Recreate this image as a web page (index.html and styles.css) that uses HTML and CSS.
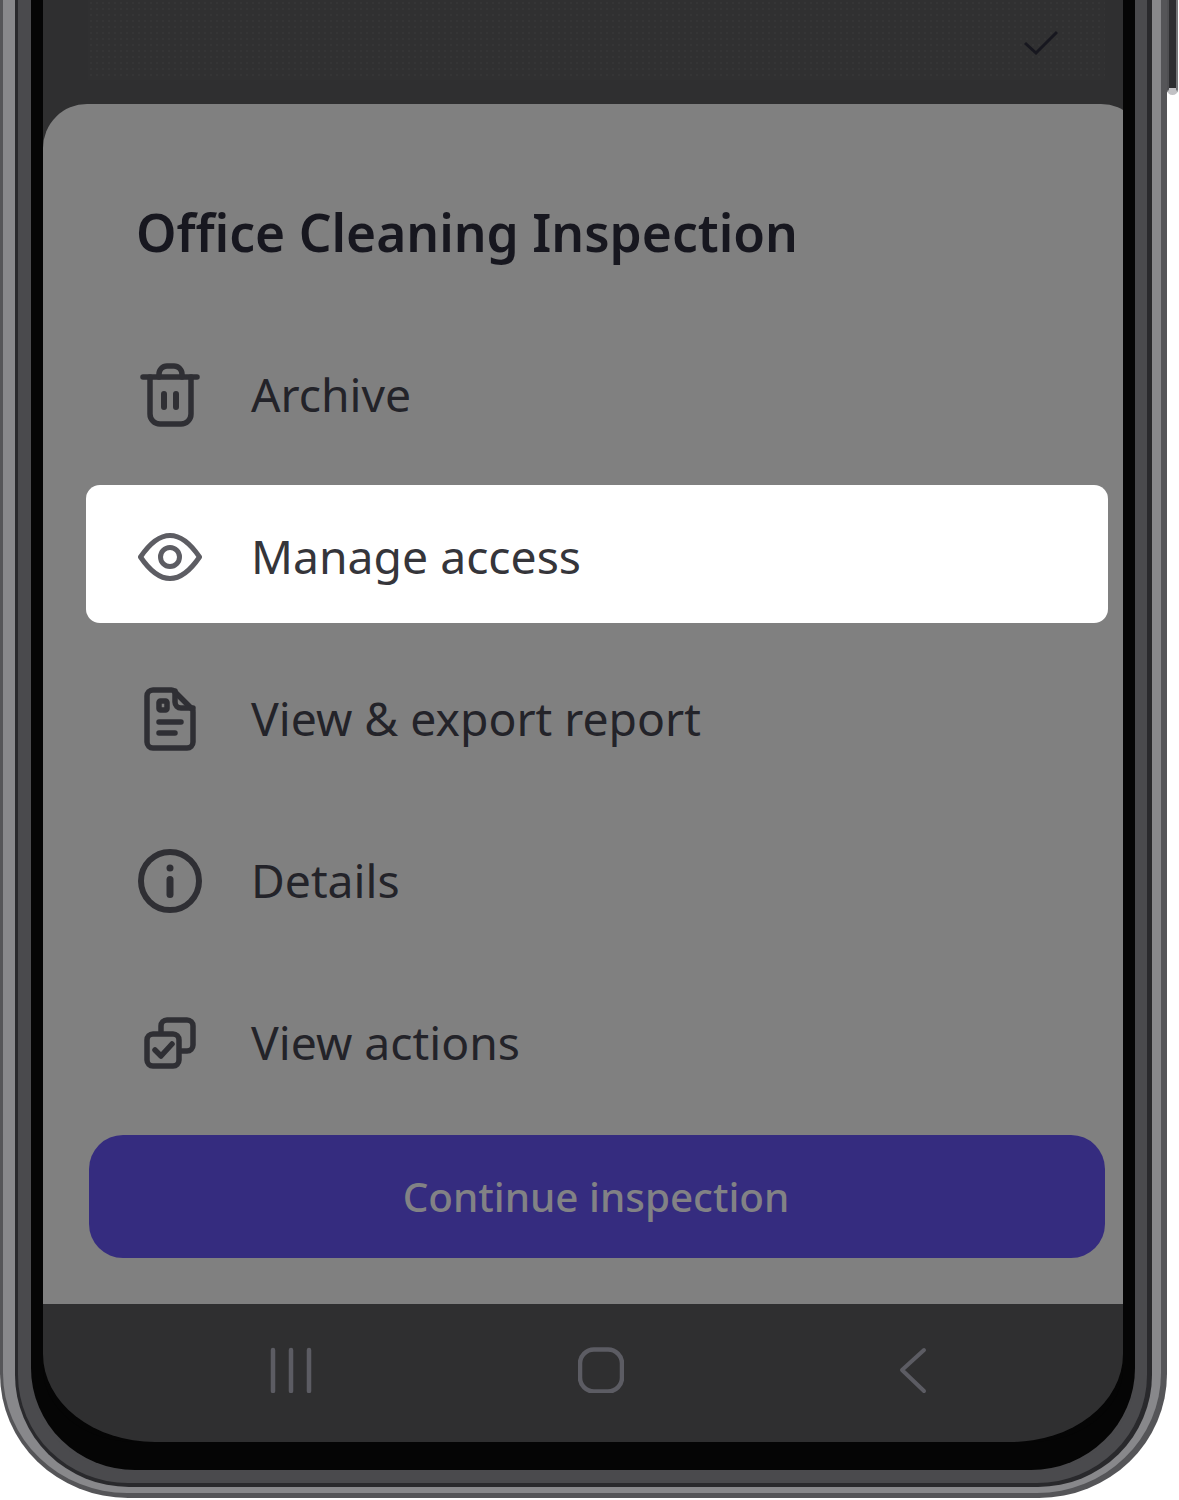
FILE: index.html
```html
<!DOCTYPE html>
<html lang="en">
<head>
  <meta charset="UTF-8">
  <meta name="viewport" content="width=device-width, initial-scale=1.0">
  <title>Office Cleaning Inspection</title>
  <link rel="stylesheet" href="styles.css">
</head>
<body>

  <div class="device">
    <div class="rim-a"><div class="rim-b"><div class="rim-c"><div class="rim-d"><div class="bezel">
      <div class="screen">

        <!-- Dimmed page behind the sheet -->
        <div class="backdrop">
          <div class="backdrop-card">
            <svg class="tick" width="36" height="28" viewBox="0 0 36 28" fill="none">
              <path d="M2 14l11 10L34 3" stroke="#17171f" stroke-width="3"/>
            </svg>
          </div>
        </div>

        <!-- Bottom sheet -->
        <div class="sheet">
          <h1 class="sheet-title">Office Cleaning Inspection</h1>

          <div class="menu">
            <div class="menu-row">
              <svg class="menu-icon" viewBox="0 0 64 68" fill="none" stroke="#2f2f34" stroke-width="5.500" stroke-linecap="round" stroke-linejoin="round">
                <path d="M5 16h54"/>
                <path d="M12 16v37a10 10 0 0 0 10 10h21a10 10 0 0 0 10-10V16"/>
                <path d="M21 16v-3a8 8 0 0 1 8-8h7a8 8 0 0 1 8 8v3"/>
                <path d="M26 33v13M38 33v13" stroke-width="6"/>
              </svg>
              <span class="menu-label">Archive</span>
            </div>
            <div class="menu-row menu-row-active">
              <svg class="menu-icon" viewBox="0 0 64 68" fill="none" stroke="#5d5d63" stroke-width="5" stroke-linejoin="round">
                <path d="M2.500 34C12 20 21 12.500 32 12.500S52 20 61.500 34C52 48 43 55.500 32 55.500S12 48 2.500 34z"/>
                <circle cx="32" cy="34" r="9.500"/>
              </svg>
              <span class="menu-label">Manage access</span>
            </div>
            <div class="menu-row">
              <svg class="menu-icon" viewBox="0 0 64 68" fill="none" stroke="#2f2f34" stroke-width="5.500" stroke-linecap="round" stroke-linejoin="round">
                <path d="M15 5h18a4 4 0 0 1 3 1l18 18a4 4 0 0 1 1 3v30a6 6 0 0 1-6 6H15a6 6 0 0 1-6-6V11a6 6 0 0 1 6-6z"/>
                <path d="M37 6v11a6 6 0 0 0 6 6h12"/>
                <rect x="21" y="16" width="8" height="9" rx="1.500"/>
                <path d="M21 37h22M21 48h16"/>
              </svg>
              <span class="menu-label">View &amp; export report</span>
            </div>
            <div class="menu-row">
              <svg class="menu-icon" viewBox="0 0 64 68" fill="none" stroke="#2f2f34" stroke-width="6" stroke-linecap="round">
                <circle cx="32" cy="34" r="29"/>
                <path d="M32 32.500v15" stroke-width="7"/>
                <circle cx="32" cy="21" r="3.500" fill="#2f2f34" stroke="none"/>
              </svg>
              <span class="menu-label">Details</span>
            </div>
            <div class="menu-row">
              <svg class="menu-icon" viewBox="0 0 64 68" fill="none" stroke="#2f2f34" stroke-width="5.500" stroke-linecap="round" stroke-linejoin="round">
                <path d="M23 22v-5a6 6 0 0 1 6-6h20a6 6 0 0 1 6 6v19a6 6 0 0 1-6 6h-5"/>
                <rect x="9" y="25" width="32" height="32" rx="6"/>
                <path d="M17 41l6 6 11-12"/>
              </svg>
              <span class="menu-label">View actions</span>
            </div>
          </div>

          <button class="continue-btn">Continue inspection</button>
        </div>

        <!-- Android navigation -->
        <div class="nav-bar">
          <svg width="46" height="46" viewBox="0 0 46 46" fill="none" stroke="#5c5c63" stroke-width="4.500" stroke-linecap="round">
            <path d="M5 3v41M23 3v41M41 3v41"/>
          </svg>
          <svg width="46" height="46" viewBox="0 0 46 46" fill="none" stroke="#5c5c63" stroke-width="4.500">
            <rect x="2" y="2.500" width="42" height="42" rx="14"/>
          </svg>
          <svg width="40" height="50" viewBox="0 0 40 50" fill="none" stroke="#5c5c63" stroke-width="4" stroke-linecap="round" stroke-linejoin="round">
            <path d="M36 5L14 25l22 21"/>
          </svg>
        </div>

      </div>
    </div></div></div></div></div>
    <div class="side-button"></div>
  </div>

</body>
</html>
```

FILE: styles.css
```css
body {
  margin: 0;
  background-color: #fff;
  font-family: "Noto Sans", Arial, sans-serif;
}
.device {
  width: 1179px;
  height: 1500px;
  display: flex;
  align-items: flex-start;
  overflow: hidden;
}
.side-button {
  width: 11px;
  height: 95px;
  flex: none;
  background-color: #2d2d30;
  border-left: 2px solid #4f4f52;
  border-right: 2px solid #77777a;
  border-bottom: 7px solid #c2c2c5;
  border-radius: 0 0 6px 6px;
  box-sizing: border-box;
}

/* Phone frame, one nested ring per metal band */
.rim-a, .rim-b, .rim-c, .rim-d, .bezel {
  box-sizing: border-box;
  border-style: solid;
  border-top-width: 0;
}
.rim-a {
  width: 1167px;
  height: 1498px;
  flex: none;
  background-color: #555558;
  border-color: #555558;
  border-width: 0 6px 5px 3px;
  border-radius: 0 0 128px 128px / 0 0 124px 124px;
}
.rim-b {
  height: 100%;
  background-color: #88888b;
  border-color: #88888b;
  border-width: 0 9px 6px 12px;
  border-radius: 0 0 124px 124px / 0 0 120px 120px;
}
.rim-c {
  height: 100%;
  background-color: #29292c;
  border-color: #29292c;
  border-width: 0 5px 4px 3px;
  border-radius: 0 0 114px 114px / 0 0 112px 112px;
}
.rim-d {
  height: 100%;
  background-color: #4a4a4d;
  border-color: #4a4a4d;
  border-width: 0 12px 13px 13px;
  border-radius: 0 0 110px 110px / 0 0 108px 108px;
}
.bezel {
  height: 100%;
  background-color: #050505;
  border-color: #050505;
  border-width: 0 12px 28px 12px;
  border-radius: 0 0 104px 104px / 0 0 102px 102px;
}
.screen {
  height: 100%;
  display: flex;
  flex-direction: column;
  background-color: #2f2f30;
  border-radius: 0 0 112px 112px / 0 0 88px 88px;
  overflow: hidden;
}

/* Dimmed page */
.backdrop {
  height: 104px;
  flex: none;
  padding: 0 18px 24px 45px;
  box-sizing: border-box;
}
.backdrop-card {
  height: 100%;
  background-color: #303031;
  background-image: radial-gradient(#353536 1px, transparent 1px);
  background-size: 6px 6px;
  display: flex;
  justify-content: flex-end;
  padding: 29px 46px 0 0;
  box-sizing: border-box;
}

/* Sheet */
.sheet {
  height: 1200px;
  flex: none;
  margin-right: -22px;
  padding: 0 37px 0 43px;
  box-sizing: border-box;
  background-color: #808080;
  border-radius: 44px 44px 0 0;
  display: flex;
  flex-direction: column;
}
.sheet-title {
  margin: 96px 0 0 50px;
  height: 64px;
  font-size: 51.500px;
  line-height: 64px;
  font-weight: 600;
  color: #17171f;
}
.menu {
  margin-top: 59px;
  display: flex;
  flex-direction: column;
  gap: 24px;
}
.menu-row {
  height: 138px;
  padding: 4px 0 0 52px;
  box-sizing: border-box;
  display: flex;
  align-items: center;
  gap: 49px;
  border-radius: 14px;
}
.menu-row-active {
  background-color: #fff;
}
.menu-icon {
  width: 64px;
  height: 68px;
  flex: none;
  margin-top: 2px;
}
.menu-label {
  font-size: 46.300px;
  color: #232329;
}
.menu-row-active .menu-label {
  color: #35353a;
}
.continue-btn {
  margin: 26px 3px 0;
  padding: 0 8px 0 6px;
  height: 123px;
  flex: none;
  border: none;
  border-radius: 34px;
  background-color: #352c7f;
  color: #828285;
  font-family: inherit;
  font-size: 40.400px;
  font-weight: 500;
}

/* Nav */
.nav-bar {
  flex: 1;
  display: flex;
  justify-content: space-between;
  align-items: center;
  padding: 0 195px 6px 225px;
}
```
